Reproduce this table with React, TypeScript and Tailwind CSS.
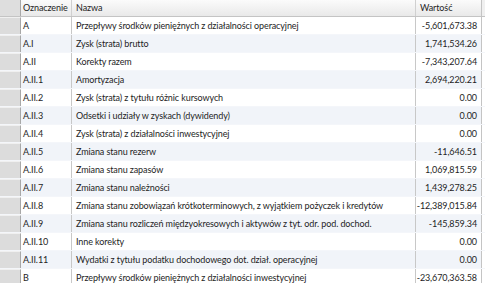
const rows = [
  ["A", "Przepływy środków pieniężnych z działalności operacyjnej", "-5,601,673.38"],
  ["A.I", "Zysk (strata) brutto", "1,741,534.26"],
  ["A.II", "Korekty razem", "-7,343,207.64"],
  ["A.II.1", "Amortyzacja", "2,694,220.21"],
  ["A.II.2", "Zysk (strata) z tytułu różnic kursowych", "0.00"],
  ["A.II.3", "Odsetki i udziały w zyskach (dywidendy)", "0.00"],
  ["A.II.4", "Zysk (strata) z działalności inwestycyjnej", "0.00"],
  ["A.II.5", "Zmiana stanu rezerw", "-11,646.51"],
  ["A.II.6", "Zmiana stanu zapasów", "1,069,815.59"],
  ["A.II.7", "Zmiana stanu należności", "1,439,278.25"],
  ["A.II.8", "Zmiana stanu zobowiązań krótkoterminowych, z wyjątkiem pożyczek i kredytów", "-12,389,015.84"],
  ["A.II.9", "Zmiana stanu rozliczeń międzyokresowych i aktywów z tyt. odr. pod. dochod.", "-145,859.34"],
  ["A.II.10", "Inne korekty", "0.00"],
  ["A.II.11", "Wydatki z tytułu podatku dochodowego dot. dział. operacyjnej", "0.00"],
  ["B", "Przepływy środków pieniężnych z działalności inwestycyjnej", "-23,670,363.58"],
];

export default function App() {
  return (
    <div
      className="w-[485px] h-[283px] overflow-hidden bg-white text-[9px] tracking-[-0.1px] text-[#1e1e1e]"
      style={{ fontFamily: 'Lato, "Open Sans", sans-serif' }}
    >
      {/* header */}
      <div className="flex h-[17px] bg-gradient-to-b from-[#fbfbfb] to-[#e9e9e9] border-b border-[#c4c4c4]">
        <div className="w-[21px] shrink-0 bg-[#dedede] border-r border-[#a8a8a8]"></div>
        <div className="w-[51px] shrink-0 border-r border-[#d0d0d0] pl-[2px] leading-[16px] whitespace-nowrap overflow-hidden">
          Oznaczenie
        </div>
        <div className="w-[344px] shrink-0 border-r border-[#d0d0d0] pl-[4px] leading-[16px]">
          Nazwa
        </div>
        <div className="w-[66px] shrink-0 border-r border-[#c4c4c4] pl-[4px] leading-[16px]">
          Wartość
        </div>
        <div className="flex-1 bg-[#f0f0f0]"></div>
      </div>

      {rows.map(([code, name, value], i) => (
        <div
          key={code}
          className={
            i % 2 === 1
              ? "flex h-[18px] bg-[#f1f4f9] border-b border-[#f4f6fa]"
              : "flex h-[18px] bg-white border-b border-[#f4f6fa]"
          }
        >
          <div className="w-[21px] shrink-0 bg-[#dcdcdc] border-r border-[#a8a8a8] border-t border-t-[#f0f0f0]"></div>
          <div className="w-[51px] shrink-0 border-r border-[#c8c8c8] pl-[2px] leading-[17px]">
            {code}
          </div>
          <div className="w-[344px] shrink-0 border-r border-[#c8c8c8] pl-[4px] leading-[17px] whitespace-nowrap overflow-hidden">
            {name}
          </div>
          <div className="w-[66px] shrink-0 border-r border-[#c4c4c4] pr-[4px] text-right leading-[17px] whitespace-nowrap">
            {value}
          </div>
          <div className="flex-1 bg-white"></div>
        </div>
      ))}
    </div>
  );
}
